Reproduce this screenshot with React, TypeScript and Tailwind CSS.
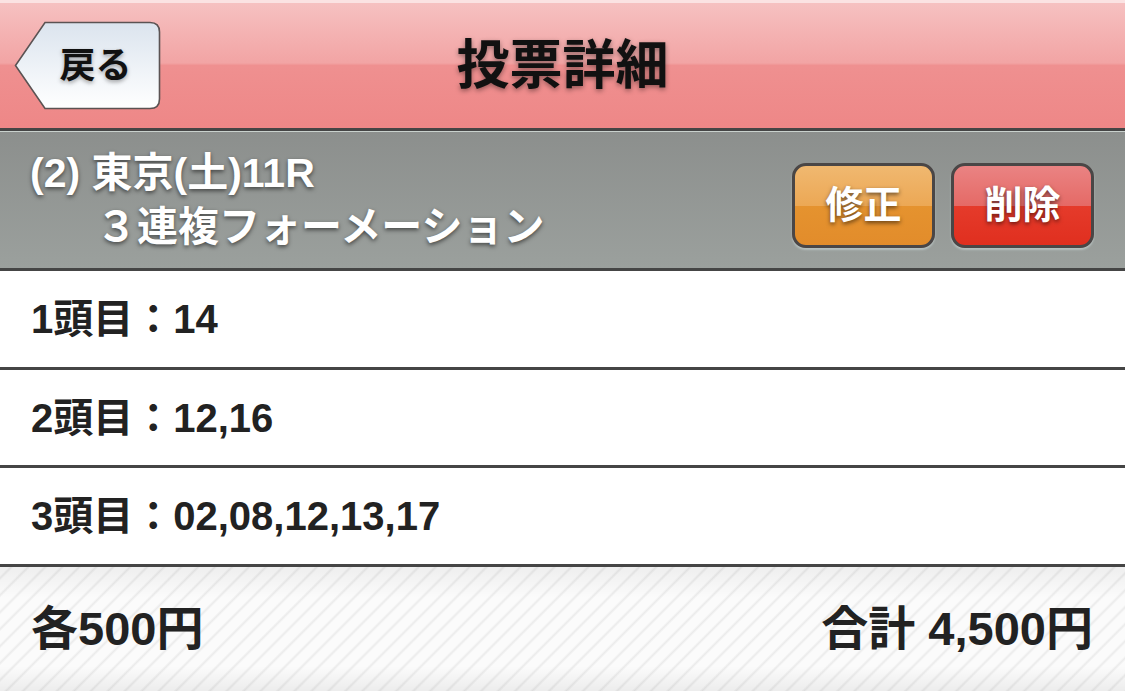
import React from "react";

const FONT = "font-['Liberation_Sans','Noto_Sans_CJK_JP',sans-serif]";

function BackButton() {
  return (
    <div className="relative ml-[14px] h-[89px] w-[147px]">
      <svg className="absolute inset-0" width="147" height="89" viewBox="0 0 147 89">
        <defs>
          <linearGradient id="bb" x1="0" y1="0" x2="0" y2="1">
            <stop offset="0" stopColor="#dbe4ee" />
            <stop offset="1" stopColor="#ffffff" />
          </linearGradient>
        </defs>
        <path
          d="M31 1.5 H136 Q145.5 1.5 145.5 11 V78 Q145.5 87.5 136 87.5 H31 L1.5 44.5 Z"
          fill="url(#bb)"
          stroke="#5b5353"
          strokeWidth="1.6"
        />
      </svg>
      <div className="relative flex h-full items-center justify-center pl-[16px] text-[36px] font-bold text-[#111] [text-shadow:0_2px_4px_rgba(0,0,0,0.35)]">
        戻る
      </div>
    </div>
  );
}

function Row({ label, value, h }: { label: string; value: string; h: string }) {
  return (
    <div className={`flex ${h} items-center border-b-[3px] border-[#454545] bg-white pl-[31px] text-[40px] font-bold text-[#222]`}>
      <span>{label}：{value}</span>
    </div>
  );
}

export default function App() {
  return (
    <div className={`flex h-[691px] w-[1125px] flex-col overflow-hidden ${FONT}`}>
      <div className="h-[3px] bg-[#fbe3e3]" />
      <div className="grid h-[125px] grid-cols-[1fr_auto_1fr] items-center bg-[linear-gradient(to_bottom,#f6c1c1_0%,#f2a4a4_48%,#ef9090_50%,#ee8787_100%)]">
        <div className="flex items-center">
          <BackButton />
        </div>
        <div className="text-[53px] font-bold text-[#111] [text-shadow:0_2px_5px_rgba(0,0,0,0.4)]">
          投票詳細
        </div>
        <div />
      </div>
      <div className="h-[3px] bg-[#454545]" />
      <div className="h-[1px] bg-[#c9d1cd]" />
      <div className="flex h-[136px] items-center justify-between bg-[linear-gradient(to_bottom,#8c8f8d,#9ba09d)] pl-[30px] pr-[31px]">
        <div className="flex flex-col text-[41px] font-bold leading-[54px] text-white [text-shadow:0_2px_4px_rgba(0,0,0,0.55)]">
          <span>(2) 東京(土)11R</span>
          <span className="pl-[66px]">３連複フォーメーション</span>
        </div>
        <div className="mt-[11px] flex gap-[16px]">
          <div className="flex h-[85px] w-[143px] items-center justify-center rounded-[14px] border-[3px] border-[#4a4646] bg-[linear-gradient(to_bottom,#f0b870_0%,#eca855_50%,#e5932f_50%,#e28c2b_100%)] text-[38px] font-bold text-white shadow-[0_2px_2px_rgba(200,215,215,0.6)] [text-shadow:0_2px_4px_rgba(0,0,0,0.55)]">
            修正
          </div>
          <div className="flex h-[85px] w-[143px] items-center justify-center rounded-[14px] border-[3px] border-[#4a4646] bg-[linear-gradient(to_bottom,#ea8383_0%,#e56a66_50%,#e53b2b_50%,#e02f1f_100%)] text-[38px] font-bold text-white shadow-[0_2px_2px_rgba(200,215,215,0.6)] [text-shadow:0_2px_4px_rgba(0,0,0,0.55)]">
            削除
          </div>
        </div>
      </div>
      <div className="h-[3px] bg-[#454545]" />
      <Row label="1頭目" value="14" h="h-[99px]" />
      <Row label="2頭目" value="12,16" h="h-[98px]" />
      <Row label="3頭目" value="02,08,12,13,17" h="h-[99px]" />
      <div className="flex flex-1 items-center justify-between bg-[linear-gradient(to_bottom,rgba(0,0,0,0.05),rgba(0,0,0,0)_25%,rgba(0,0,0,0)_80%,rgba(0,0,0,0.06)),repeating-linear-gradient(135deg,#fbfbfb_0px,#fbfbfb_6px,#ebebeb_8px,#fbfbfb_10px,#fbfbfb_12px)] pl-[31px] pr-[32px] text-[47px] font-bold text-[#222]">
        <span>各500円</span>
        <span>合計 4,500円</span>
      </div>
    </div>
  );
}
